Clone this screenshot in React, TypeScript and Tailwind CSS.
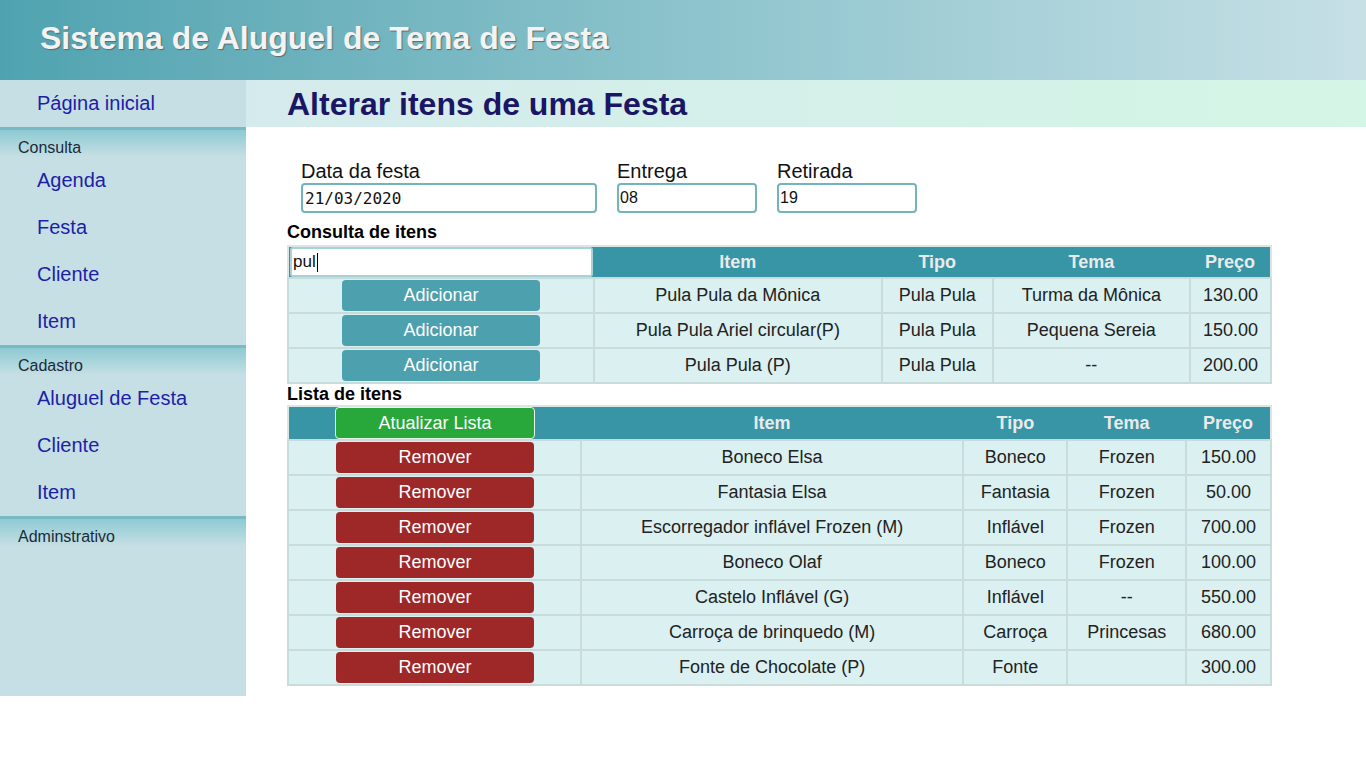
import React from "react";

const consultaItens = [
  { item: "Pula Pula da Mônica", tipo: "Pula Pula", tema: "Turma da Mônica", preco: "130.00" },
  { item: "Pula Pula Ariel circular(P)", tipo: "Pula Pula", tema: "Pequena Sereia", preco: "150.00" },
  { item: "Pula Pula (P)", tipo: "Pula Pula", tema: "--", preco: "200.00" },
];

const listaItens = [
  { item: "Boneco Elsa", tipo: "Boneco", tema: "Frozen", preco: "150.00" },
  { item: "Fantasia Elsa", tipo: "Fantasia", tema: "Frozen", preco: "50.00" },
  { item: "Escorregador inflável Frozen (M)", tipo: "Inflável", tema: "Frozen", preco: "700.00" },
  { item: "Boneco Olaf", tipo: "Boneco", tema: "Frozen", preco: "100.00" },
  { item: "Castelo Inflável (G)", tipo: "Inflável", tema: "--", preco: "550.00" },
  { item: "Carroça de brinquedo (M)", tipo: "Carroça", tema: "Princesas", preco: "680.00" },
  { item: "Fonte de Chocolate (P)", tipo: "Fonte", tema: "", preco: "300.00" },
];

const menu = [
  { titulo: "Consulta", links: ["Agenda", "Festa", "Cliente", "Item"] },
  { titulo: "Cadastro", links: ["Aluguel de Festa", "Cliente", "Item"] },
  { titulo: "Adminstrativo", links: [] as string[] },
];

const App: React.FC = () => {
  return (
    <div className="min-h-screen bg-white font-['Liberation_Sans',Arial,sans-serif]">
      {/* Topo */}
      <header className="h-[80px] flex items-center pl-[40px] pb-[5px] bg-gradient-to-r from-[#4fa3b0] via-[#8cc3cc] to-[#c6e0e6]">
        <h1 className="text-[32px] font-bold text-[#f3f3f3] [text-shadow:1px_1px_1px_#5b6b6b]">
          Sistema de Aluguel de Tema de Festa
        </h1>
      </header>

      <div className="flex">
        {/* Menu lateral */}
        <nav className="w-[246px] shrink-0 bg-[#c5dfe4]">
          <a className="h-[47px] flex items-center pl-[37px] pb-[1px] text-[20px] text-[#1e1ea8]">Página inicial</a>
          {menu.map((secao) => (
            <div key={secao.titulo} className="border-t-[3px] border-[#78b9c4]">
              <div className="h-[27px] pt-[8px] pl-[18px] text-[16px] leading-[20px] text-[#1b2a3a] bg-gradient-to-b from-[#8dcad3] to-[#c5dfe4]">
                {secao.titulo}
              </div>
              {secao.links.map((link) => (
                <a key={link} className="h-[47px] flex items-center pl-[37px] pb-[1px] text-[20px] text-[#1e1ea8]">
                  {link}
                </a>
              ))}
            </div>
          ))}
        </nav>

        {/* Conteúdo */}
        <main className="flex-1 pb-[10px]">
          <div className="h-[47px] flex items-center pl-[41px] bg-gradient-to-r from-[#d5eaec] to-[#d4f6e6]">
            <h2 className="text-[32px] font-bold text-[#1a1565]">Alterar itens de uma Festa</h2>
          </div>

          <div className="pl-[41px] pt-[33px]">
            <div className="flex gap-[20px] pl-[14px]">
              <label className="flex flex-col">
                <span className="text-[20px] leading-[23px] text-[#111]">Data da festa</span>
                <input
                  defaultValue="21/03/2020"
                  className="w-[296px] h-[30px] border-2 border-[#6fb4be] rounded-[4px] px-[2px] text-[16px] font-['DejaVu_Sans_Mono',monospace] text-[#111]"
                />
              </label>
              <label className="flex flex-col">
                <span className="text-[20px] leading-[23px] text-[#111]">Entrega</span>
                <input
                  defaultValue="08"
                  className="w-[140px] h-[30px] border-2 border-[#6fb4be] rounded-[4px] px-[1px] text-[16px] text-[#111]"
                />
              </label>
              <label className="flex flex-col">
                <span className="text-[20px] leading-[23px] text-[#111]">Retirada</span>
                <input
                  defaultValue="19"
                  className="w-[140px] h-[30px] border-2 border-[#6fb4be] rounded-[4px] px-[1px] text-[16px] text-[#111]"
                />
              </label>
            </div>

            {/* Consulta de itens */}
            <h3 className="mt-[6px] text-[18px] leading-[26px] font-bold text-black">Consulta de itens</h3>
            <table className="w-[985px] border-collapse border-2 border-[#dde4e4] text-[18px] text-[#222]">
              <thead>
                <tr className="h-[32px] bg-[#3795a5] text-[#eaeaea] font-bold">
                  <th className="w-[306px] p-0">
                    <div className="h-[30px] mx-[1px] bg-white border-2 border-[#a9d2d8] rounded-[3px] flex items-center px-[1px] text-[17px] font-normal text-[#111]">
                      pul<span className="w-px h-[19px] bg-black ml-px" />
                    </div>
                  </th>
                  <th className="w-[289px]">Item</th>
                  <th className="w-[111px]">Tipo</th>
                  <th className="w-[198px]">Tema</th>
                  <th className="w-[81px]">Preço</th>
                </tr>
              </thead>
              <tbody>
                {consultaItens.map((c) => (
                  <tr key={c.item} className="h-[35px] bg-[#dbf0f1] text-center">
                    <td className="border-2 border-[#c8dcdc] p-0">
                      <button className="w-[198px] h-[31px] ml-[53px] block rounded-[4px] bg-[#4da0ae] text-white text-[18px]">
                        Adicionar
                      </button>
                    </td>
                    <td className="border-2 border-[#c8dcdc]">{c.item}</td>
                    <td className="border-2 border-[#c8dcdc]">{c.tipo}</td>
                    <td className="border-2 border-[#c8dcdc]">{c.tema}</td>
                    <td className="border-2 border-[#c8dcdc]">{c.preco}</td>
                  </tr>
                ))}
              </tbody>
            </table>

            {/* Lista de itens */}
            <h3 className="-mt-px text-[18px] leading-[22px] font-bold text-black">Lista de itens</h3>
            <table className="w-[985px] border-collapse border-2 border-[#dde4e4] text-[18px] text-[#222]">
              <thead>
                <tr className="h-[33px] bg-[#3795a5] text-[#eaeaea] font-bold">
                  <th className="w-[293px] p-0">
                    <button className="w-[200px] h-[32px] ml-[46px] block rounded-[4px] border border-[#e8f5e8] bg-[#28a83a] text-white text-[18px] font-normal">
                      Atualizar Lista
                    </button>
                  </th>
                  <th className="w-[384px]">Item</th>
                  <th className="w-[104px]">Tipo</th>
                  <th className="w-[119px]">Tema</th>
                  <th className="w-[85px]">Preço</th>
                </tr>
              </thead>
              <tbody>
                {listaItens.map((l) => (
                  <tr key={l.item} className="h-[35px] bg-[#dbf0f1] text-center">
                    <td className="border-2 border-[#c8dcdc] p-0">
                      <button className="w-[198px] h-[31px] ml-[47px] block rounded-[4px] bg-[#9e2828] text-white text-[18px]">
                        Remover
                      </button>
                    </td>
                    <td className="border-2 border-[#c8dcdc]">{l.item}</td>
                    <td className="border-2 border-[#c8dcdc]">{l.tipo}</td>
                    <td className="border-2 border-[#c8dcdc]">{l.tema}</td>
                    <td className="border-2 border-[#c8dcdc]">{l.preco}</td>
                  </tr>
                ))}
              </tbody>
            </table>
          </div>
        </main>
      </div>
    </div>
  );
};

export default App;
